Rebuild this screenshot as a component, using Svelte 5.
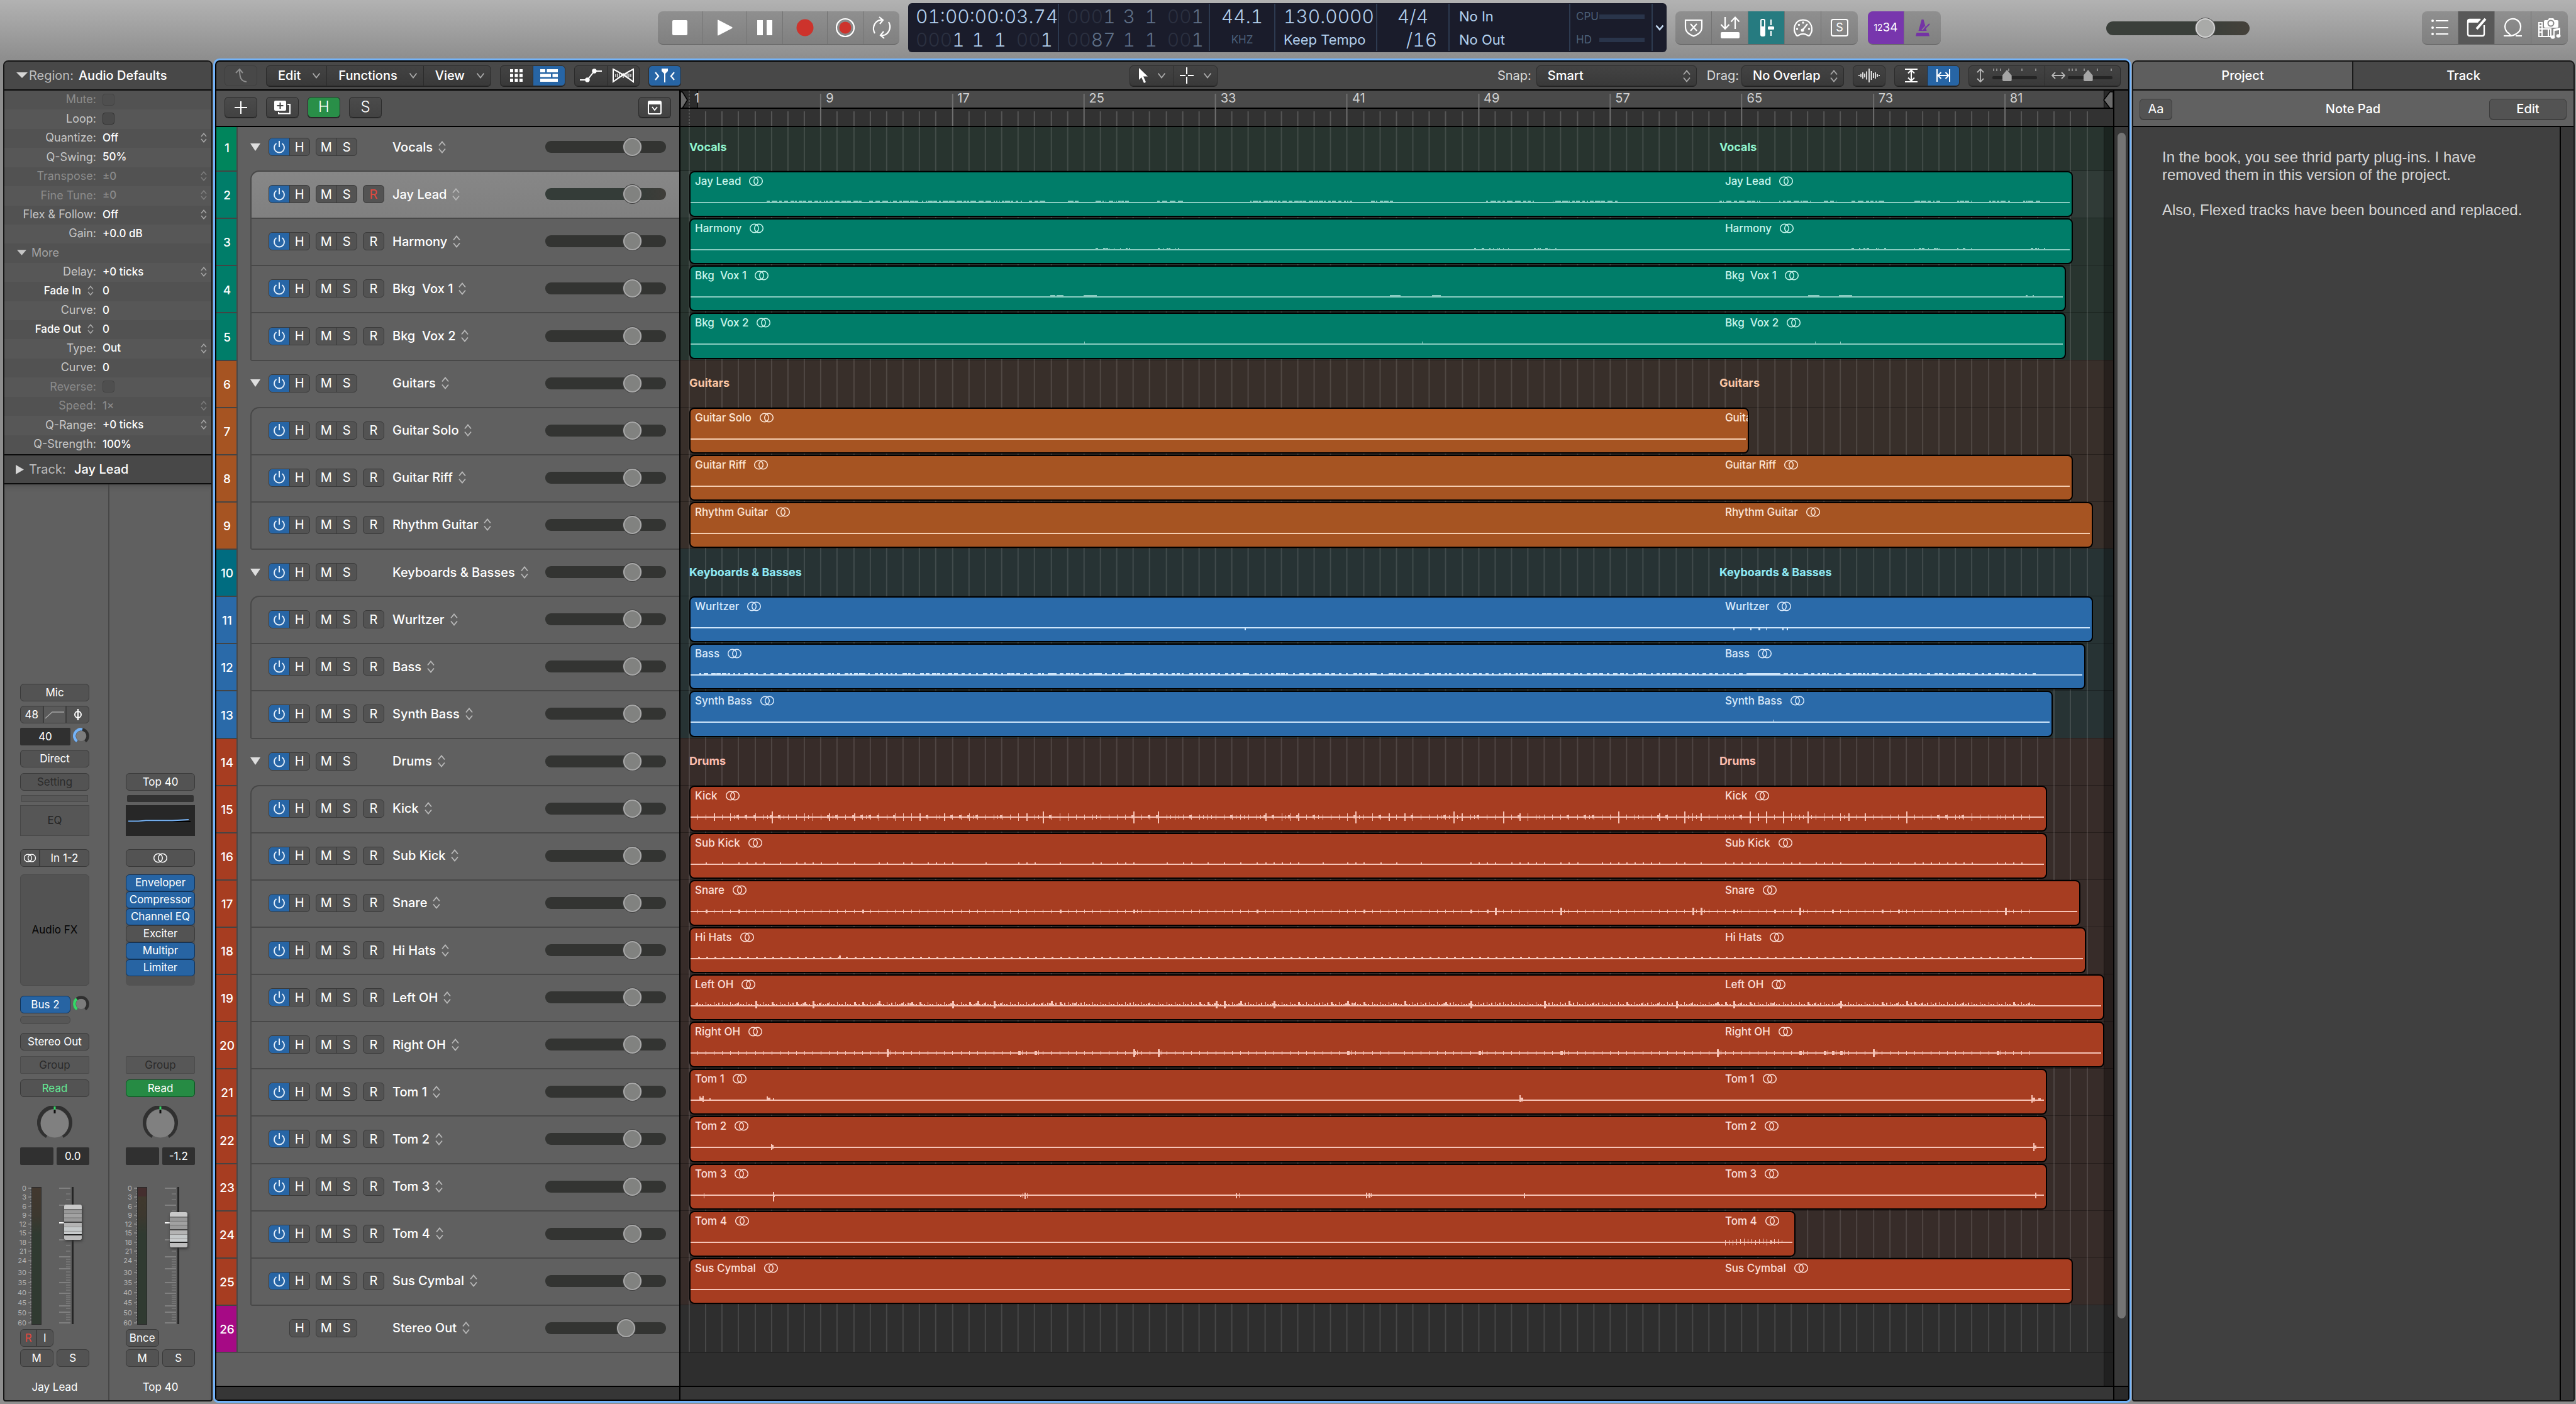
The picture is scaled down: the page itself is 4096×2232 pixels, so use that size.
<script>
  const LANE = 2279;
  const FIRST = 14;
  const BAR = 26.16;

  const green = { base: '#007d69', wave: '#8accc1', text: '#c8f5ec', lane: '#28342f', group: '#8ff5cf' };
  const orange = { base: '#a65422', wave: '#f5cdb0', text: '#fde6d6', lane: '#382f2a', group: '#fbc6a4' };
  const blue = { base: '#2a6aa9', wave: '#cfe6fb', text: '#dcebfc', lane: '#273334', group: '#8feaf5' };
  const red = { base: '#a73d21', wave: '#f6c4b7', text: '#fddfd8', lane: '#372c29', group: '#fbbcae' };
  const grey = { base: '#a60a85', wave: '#fff', text: '#fff', lane: '#2e2e2e', group: '#fff' };

  const tracks = [
    { name: 'Vocals', kind: 'group', c: green, num: '#00855c' },
    { name: 'Jay Lead', c: green, end: 3297, wave: 'lead', selected: true, first: true },
    { name: 'Harmony', c: green, end: 3297, wave: 'harmony' },
    { name: 'Bkg  Vox 1', c: green, end: 3286, wave: 'vox1' },
    { name: 'Bkg  Vox 2', c: green, end: 3286, wave: 'vox2' },
    { name: 'Guitars', kind: 'group', c: orange },
    { name: 'Guitar Solo', c: orange, end: 2782, first: true },
    { name: 'Guitar Riff', c: orange, end: 3297 },
    { name: 'Rhythm Guitar', c: orange, end: 3329 },
    { name: 'Keyboards & Basses', kind: 'group', c: blue, num: '#006c80' },
    { name: 'Wurltzer', c: blue, end: 3329, wave: 'wurl', first: true },
    { name: 'Bass', c: blue, end: 3317, wave: 'bass' },
    { name: 'Synth Bass', c: blue, end: 3265, wave: 'synth' },
    { name: 'Drums', kind: 'group', c: red },
    { name: 'Kick', c: red, end: 3256, wave: 'kick', first: true },
    { name: 'Sub Kick', c: red, end: 3256, wave: 'subkick' },
    { name: 'Snare', c: red, end: 3309, wave: 'snare' },
    { name: 'Hi Hats', c: red, end: 3318, wave: 'hats' },
    { name: 'Left OH', c: red, end: 3347, wave: 'left' },
    { name: 'Right OH', c: red, end: 3347, wave: 'right' },
    { name: 'Tom 1', c: red, end: 3256, wave: 'tom1' },
    { name: 'Tom 2', c: red, end: 3256, wave: 'tom2' },
    { name: 'Tom 3', c: red, end: 3256, wave: 'tom3' },
    { name: 'Tom 4', c: red, end: 2856, wave: 'tom4' },
    { name: 'Sus Cymbal', c: red, end: 3297 },
    { name: 'Stereo Out', kind: 'output', c: grey }
  ];

  const lines = Array.from({ length: 86 }, (_, i) => Math.round(FIRST + i * BAR));
  const bars = [1, 9, 17, 25, 33, 41, 49, 57, 65, 73, 81];
  const share = (v) => ((v / LANE) * 100).toFixed(3);

  function random(seed) {
    let s = seed;
    return () => {
      s = (s * 1103515245 + 12345) % 2147483648;
      return s / 2147483648;
    };
  }

  const spans = {
    lead: [[1219, 1370], [1382, 1460], [1466, 1626], [1636, 1664], [1698, 1718], [1742, 1799], [1840, 1883], [1988, 2150], [2180, 2220], [2364, 2440], [2470, 2573], [2735, 2800], [2830, 2880], [2901, 2922], [2945, 3000], [3045, 3086], [3113, 3138], [3164, 3197], [3218, 3245]],
    harmony: [[1742, 1773], [1781, 1797], [1841, 1883], [2345, 2400], [2440, 2480], [2945, 2973], [2984, 3000], [3045, 3086], [3113, 3140], [3230, 3254]]
  };

  const marks = {
    vox1: [[1670, 8, 2, 0], [1680, 11, 2, 0], [1723, 21, 2, 0], [2210, 18, 2, 0], [2278, 14, 2, 0], [2876, 18, 2, 0], [2925, 21, 2, 0], [3222, 3, 2, 0], [3233, 2, 2, 0]],
    vox2: [[1724, 1, 3, 0], [2262, 1, 3, 0], [2887, 1, 3, 0], [2927, 1, 3, 0]],
    wurl: [[1979, 2, 0, 3], [2757, 2, 0, 3], [2784, 2, 0, 3], [2797, 3, 0, 3], [2809, 1, 0, 3], [2835, 2, 0, 3], [2842, 2, 0, 3]],
    synth: [[2821, 1, 3, 0]],
    tom1: [[1112, 2, 5, 0], [1114, 5, 3, 0], [1117, 2, 6, 2], [1128, 2, 2, 0], [1219, 2, 5, 0], [1221, 4, 3, 0], [1229, 2, 2, 0], [2417, 2, 7, 2], [2419, 4, 3, 1], [3231, 2, 8, 3], [3233, 4, 3, 1], [3242, 4, 2, 0]],
    tom2: [[1226, 2, 4, 3], [1228, 2, 3, 1], [3234, 2, 6, 5], [3236, 3, 2, 1]],
    tom3: [[1119, 1, 2, 4], [1229, 2, 4, 9], [1231, 1, 0, 2], [1622, 2, 0, 2], [1626, 1, 2, 3], [1629, 2, 3, 5], [1633, 1, 2, 4], [1965, 2, 2, 4], [1970, 1, 2, 3], [2172, 2, 3, 4], [2176, 3, 2, 3], [2180, 1, 2, 2], [2424, 2, 2, 4], [3237, 2, 3, 4]]
  };

  // Each mark is x, width, height above the centre line, height below it.
  function waveMarks(kind) {
    const r = random(kind.length * 977 + kind.charCodeAt(0) * 31 + kind.charCodeAt(1));
    if (marks[kind]) return marks[kind];
    const out = [];
    if (spans[kind]) {
      for (const [a, b] of spans[kind]) {
        for (let x = a; x < b; ) {
          const w = 1 + Math.floor(r() * (kind === 'lead' ? 9 : 4));
          out.push([x, Math.min(w, b - x), 2, 0]);
          x += w + 1 + Math.floor(r() * (kind === 'lead' ? 4 : 9));
        }
      }
    } else if (kind === 'bass') {
      for (let x = 1112; x < 3240; x += 7 + Math.floor(r() * 6)) out.push([x, 3 + Math.floor(r() * 5), 2, 0]);
      out.push([2783, 47, 2, 0]);
    } else if (kind === 'tom4') {
      for (let x = 2744; x < 2832; x += 6) out.push([x, 1, 3 + Math.floor(r() * 3), 2 + Math.floor(r() * 3)]);
      out.push([2816, 3, 2, 1], [2834, 1, 2, 0]);
    } else {
      for (let i = 0; i < 163; i++) {
        const x = Math.round(1109 + i * 13.08);
        const q = r();
        if (kind === 'kick') {
          const tall = q > 0.94 ? 9 : q > 0.75 ? 5 : 3;
          out.push([x, q > 0.85 ? 2 : 1, tall, tall]);
          if (r() > 0.75) out.push([x + 6, 1, 2, 2]);
          if (r() > 0.7) out.push([x - 3, 3, 2, 1]);
        } else if (kind === 'subkick') {
          if (q > 0.4) out.push([x, 2, 2, 0]);
        } else if (kind === 'snare') {
          out.push([x, q > 0.85 ? 3 : 1, q > 0.96 ? 5 : 2, q > 0.96 ? 5 : 2]);
          if (q > 0.9) out.push([x + 6, 1, 2, 1]);
        } else if (kind === 'hats') {
          out.push([x + 1, 3, 2, 0]);
          if (i === 8) out.push([1334, 3, 4, 0]);
        } else if (kind === 'left') {
          out.push([x, q > 0.8 ? 3 : 1, q > 0.9 ? 7 : 5, q > 0.93 ? 3 : 0]);
          out.push([x + 3, 2, 2, 0], [x + 7, 2, r() > 0.7 ? 4 : 2, 0]);
          if (r() > 0.8) out.push([x - 3, 3, 3, 0]);
        } else if (kind === 'right') {
          out.push([x, q > 0.9 ? 3 : 1, q > 0.95 ? 5 : 2, q > 0.95 ? 5 : 2]);
          if (q > 0.9) out.push([x + 6, 1, 3, 2], [x + 3, 1, 2, 2]);
        }
      }
    }
    return out;
  }

  function wavePath(t) {
    const w = t.end - 1100;
    let d = `M0 48H${w - 3}V50H0Z`;
    if (t.wave) {
      for (const [x, mw, up, down] of waveMarks(t.wave)) {
        d += `M${x - 1098} ${48 - up}h${mw}v${up + down + 2}h${-mw}z`;
      }
    }
    return d;
  }

  const params = [
    { l: 'Mute:', box: true, off: true },
    { l: 'Loop:', box: true },
    { l: 'Quantize:', v: 'Off', a: true },
    { l: 'Q-Swing:', v: '50%' },
    { l: 'Transpose:', v: '±0', a: true, off: true },
    { l: 'Fine Tune:', v: '±0', a: true, off: true },
    { l: 'Flex & Follow:', v: 'Off', a: true },
    { l: 'Gain:', v: '+0.0 dB' },
    { more: true },
    { l: 'Delay:', v: '+0 ticks', a: true },
    { l: 'Fade In', v: '0', pick: true },
    { l: 'Curve:', v: '0' },
    { l: 'Fade Out', v: '0', pick: true },
    { l: 'Type:', v: 'Out', a: true },
    { l: 'Curve:', v: '0' },
    { l: 'Reverse:', box: true, off: true },
    { l: 'Speed:', v: '1×', a: true, off: true },
    { l: 'Q-Range:', v: '+0 ticks', a: true },
    { l: 'Q-Strength:', v: '100%' }
  ];

  const scale = [['0', 9], ['3', 23], ['6', 38], ['9', 52], ['12', 66], ['15', 80], ['18', 95], ['21', 109], ['24', 124], ['30', 143], ['35', 159], ['40', 175], ['45', 191], ['50', 207], ['60', 223]];
  const majors = [9, 36, 91, 118, 137, 159, 176, 196, 206, 223];
  const minors = [18, 27, 45, 54, 73, 82, 100, 109, 122, 126, 130, 134, 142, 147, 151, 155, 163, 167, 171, 180, 183, 186, 189, 192, 200, 210, 214, 218];

  const plugins = [['Enveloper', 1], ['Compressor', 1], ['Channel EQ', 1], ['Exciter', 0], ['Multipr', 1], ['Limiter', 1]];

  const note = 'In the book, you see thrid party plug-ins. I have\nremoved them in this version of the project.\n\nAlso, Flexed tracks have been bounced and replaced.';
</script>

{#snippet updown()}
  <svg class="updown" viewBox="0 0 12 20" aria-hidden="true"><path d="M1 7.500 6 1.500l5 6M1 12.500l5 6 5-6" /></svg>
{/snippet}

{#snippet chev()}
  <svg class="chev" viewBox="0 0 14 10" aria-hidden="true"><path d="M1.500 1.500 7 8.500l5.500-7" /></svg>
{/snippet}

{#snippet stereo()}
  <svg class="stereo" viewBox="0 0 24 16" aria-hidden="true"><circle cx="8.500" cy="8" r="6.800" /><circle cx="15.500" cy="8" r="6.800" /></svg>
{/snippet}

{#snippet digits(fields)}
  <span class="digits">
    {#each fields as [dim, lit]}<span><i>{dim}</i>{lit}</span>{/each}
  </span>
{/snippet}

{#snippet pan()}
  <svg class="pan" viewBox="0 0 56 52" aria-hidden="true">
    <path d="M15.500 48.500A25 25 0 1 1 40.500 48.500" fill="none" stroke="#303030" stroke-width="6" />
    <circle cx="28" cy="28" r="22.500" fill="#808080" />
    <path d="M28 1v5" stroke="#35d866" stroke-width="3" /><path d="M28 6v6" stroke="#111" stroke-width="3" />
  </svg>
{/snippet}

{#snippet smallKnob(color, d)}
  <svg class="knob" viewBox="0 0 26 26" aria-hidden="true">
    <path d="M6.500 21.500A10.600 10.600 0 1 1 19.500 21.500" fill="none" stroke="#2f2f2f" stroke-width="4.500" />
    <path {d} fill="none" stroke={color} stroke-width="4.500" />
    <circle cx="13" cy="13" r="8" fill="#7c7c7c" />
  </svg>
{/snippet}

{#snippet meter(id, value, hot)}
  <div class="meter">
    <svg viewBox="0 0 110 226" aria-hidden="true">
      <defs>
        <linearGradient id="m{id}" x2="0" y2="1">
          {#if hot}<stop offset="0" stop-color="#442e2e" /><stop offset=".06" stop-color="#442e2e" /><stop offset=".07" stop-color="#40392e" />{:else}<stop offset="0" stop-color="#42382f" />{/if}
          <stop offset=".2" stop-color="#3d382f" /><stop offset=".34" stop-color="#303a31" /><stop offset="1" stop-color="#303a31" />
        </linearGradient>
      </defs>
      {#each scale as [label, y]}
        <text x="10" y={y + 4}>{label}</text>
        <path d="M13 {y}h5" stroke="#a8a8a8" />
      {/each}
      {#each Array(48) as _, i}<path d="M16 {9 + i * 4.500}h2" stroke="#979797" />{/each}
      <path d="M18 7h16v219H18z" fill="#2a2a2a" />
      <path d="M19 8h14v217H19z" fill="url(#m{id})" />
      {#each majors as y}<path d="M62 {y}h18" stroke="#a0a0a0" />{/each}
      {#each minors as y}<path d="M73 {y}h7" stroke="#878787" />{/each}
      <path d="M62 64h8" stroke="#fff" stroke-width="2" />
    </svg>
    <input class="fader" type="range" min="0" max="1000" {value} aria-label="Volume" />
  </div>
{/snippet}

<div class="app">
  <header class="topbar">
    <span class="g1046"></span>
    <div class="seg transport">
      <button aria-label="Stop"><svg width="40" height="40" viewBox="0 0 40 40"><rect x="8" y="8" width="24" height="24" rx="2" fill="#fff" /></svg></button>
      <button aria-label="Play"><svg width="40" height="40" viewBox="0 0 40 40"><path d="M9 8.500q0-1.500 1.400-.8L32 19q1.500 1 0 2L10.400 32.300Q9 33 9 31.500z" fill="#fff" /></svg></button>
      <button class="nar" aria-label="Pause"><svg width="40" height="40" viewBox="0 0 40 40"><path d="M8 8h9v24H8zM23 8h9v24h-9z" fill="#fff" /></svg></button>
      <button aria-label="Record"><svg width="40" height="40" viewBox="0 0 40 40"><circle cx="20" cy="20" r="13.500" fill="#cd332c" /></svg></button>
      <button class="nar" aria-label="Capture"><svg width="40" height="40" viewBox="0 0 40 40"><circle cx="20" cy="20" r="14" fill="none" stroke="#fff" stroke-width="2.200" /><circle cx="20" cy="20" r="9.500" fill="#cd332c" /></svg></button>
      <button class="nar" aria-label="Cycle"><svg width="40" height="40" viewBox="0 0 40 40" fill="none" stroke="#fff" stroke-width="2.200"><path d="M9 29A14.500 14.500 0 0 1 15 8.500l5-1M31 11a14.500 14.500 0 0 1-6 20.500l-5 1M16 3l6 5-5 6M24 37l-6-5 5-6" /></svg></button>
    </div>
    <div class="lcd">
      <div class="pos">
        <span class="time">01:00:00:03.74</span>
        {@render digits([['000', '1'], ['', '1'], ['', '1'], ['00', '1']])}
      </div>
      <div class="pos loc">
        {@render digits([['000', '1'], ['', '3'], ['', '1'], ['00', '1']])}
        {@render digits([['00', '87'], ['', '1'], ['', '1'], ['00', '1']])}
      </div>
      <div class="khz"><b>44.1</b><small>KHZ</small></div>
      <div class="tempo"><b>130.0000</b><em>Keep Tempo</em></div>
      <div class="sig"><b>4/4</b><b class="den">/16</b></div>
      <div class="io"><em>No In</em><em>No Out</em></div>
      <div class="load"><small>CPU<i></i></small><small>HD<i></i></small></div>
      <button class="lcdmenu" aria-label="Display mode"><svg width="14" height="10" viewBox="0 0 14 10"><path d="M1.500 1.500 7 8l5.500-6.500" fill="none" stroke="#c4daf2" stroke-width="2.600" /></svg></button>
    </div>
    <div class="seg modes">
      <button aria-label="Replace"><svg width="40" height="40" viewBox="0 0 40 40" fill="none" stroke="#fff" stroke-width="2.200"><path d="M7 8h26v11c0 9-7 12-13 14.500C14 31 7 28 7 19zM15 14l10 11M25 14 15 25" /></svg></button>
      <button aria-label="Low latency"><svg width="40" height="40" viewBox="0 0 40 40" fill="none" stroke="#fff" stroke-width="2.200"><path d="M12 3v18M5.500 15l6.500 7 6.500-7M28 22V4M21.500 10.500 28 3.500l6.500 7" /><rect x="5" y="27" width="30" height="10" rx="2" fill="#fff" stroke="none" /></svg></button>
      <button class="teal" aria-label="Mixer"><svg width="40" height="40" viewBox="0 0 40 40"><rect x="11" y="7" width="6" height="26" rx="2" fill="none" stroke="#fff" stroke-width="2" /><path d="M11 18h6v14h-6zM26 7h2v9h-2zM26 25h2v8h-2z" fill="#fff" /><rect x="22" y="18" width="10" height="5" rx="1.500" fill="#fff" /></svg></button>
      <button aria-label="Tuner"><svg width="40" height="40" viewBox="0 0 40 40" fill="none" stroke="#fff" stroke-width="2.200"><path d="M9 31.500C3 23 6 8 20 7.500 34 8 37 23 31 31.500c-1 2-2.500 1.500-4 .5-5-3-9-3-14 0-1.500 1-3 1.500-4-.5zM19 24l8-10" /><g fill="#fff" stroke="none"><circle cx="20" cy="12" r="1.700" /><circle cx="13.500" cy="15.500" r="1.700" /><circle cx="10.500" cy="22" r="1.700" /><circle cx="29.500" cy="22" r="1.700" /><circle cx="19" cy="24" r="2.500" /></g></svg></button>
      <button aria-label="Solo"><span class="boxs">S</span></button>
    </div>
    <div class="seg count">
      <button class="purple" aria-label="Count in"><small>12</small><big>34</big></button>
      <button aria-label="Metronome"><svg width="40" height="40" viewBox="0 0 40 40" fill="#7433a5"><path d="M18.500 7h3l5 18h-13zM10.500 28h19l1.500 5.500H9z" /><path d="M20 25 31 14" stroke="#7433a5" stroke-width="2" /><path d="m19 24 5-6" stroke="#888" stroke-width="1.500" /></svg></button>
    </div>
    <span class="g263"></span>
    <input class="master" type="range" min="0" max="100" value="72" aria-label="Master volume" />
    <span class="g274"></span>
    <div class="seg views">
      <button aria-label="List editors"><svg width="40" height="40" viewBox="0 0 40 40" fill="#fff"><circle cx="8" cy="9" r="2" /><circle cx="8" cy="20" r="2" /><circle cx="8" cy="30" r="2" /><path d="M13 8h20v2H13zM13 19h20v2H13zM13 29h20v2H13z" /></svg></button>
      <button class="dark" aria-label="Note pads"><svg width="40" height="40" viewBox="0 0 40 40"><path d="M32 16v14q0 3-3 3H9q-3 0-3-3V10q0-3 3-3h17" fill="none" stroke="#fff" stroke-width="2.400" /><path d="M6 8q0-2 3-2h18l-5 6H6z" fill="#fff" /><path d="M20 22 34 6" stroke="#fff" stroke-width="4" /></svg></button>
      <button aria-label="Loop browser"><svg width="40" height="40" viewBox="0 0 40 40" fill="none" stroke="#fff" stroke-width="2.200"><path d="M5 33h11l4-1c6-2 12-6 12-13A12.500 12.500 0 1 0 13 29l3 3M24 33h10M16 33l6-1" /></svg></button>
      <button aria-label="Media browser"><svg width="40" height="40" viewBox="0 0 40 40" fill="#fff"><path d="M13 8h4l2-3h7l2 3h4q2 0 2 2v8q0 2-2 2H13q-2 0-2-2v-8q0-2 2-2z" /><circle cx="22" cy="13" r="4.500" fill="none" stroke="#888" stroke-width="2" /><path d="M3 12h5v22H3zM8 22h14v12H8z" fill="none" stroke="#fff" stroke-width="2" /><path d="M3 17h5M3 22h5M3 27h5M18 22v12" stroke="#fff" stroke-width="2" /><path d="M26 22l11-2v13h-2V24l-7 1v11h-2z" /><ellipse cx="25" cy="35" rx="3.500" ry="2.800" /><ellipse cx="34" cy="33" rx="3.500" ry="2.800" /></svg></button>
    </div>
  </header>

  <div class="body">
    <aside class="inspector">
      <button class="phead"><svg class="tri" viewBox="0 0 18 10"><path d="M0 0h18L9 9z" /></svg><span>Region:</span> <strong>Audio Defaults</strong></button>
      <div class="params">
        {#each params as p, i}
          {#if p.more}
            <button class="param more"><svg class="tri" viewBox="0 0 16 9"><path d="M0 0h16L8 9z" /></svg>More</button>
          {:else}
            <div class="param" class:off={p.off}>
              <label for="p{i}" class:pick={p.pick}>{p.l}{#if p.pick}{@render updown()}{/if}</label>
              {#if p.box}
                <input id="p{i}" type="checkbox" />
              {:else}
                <button id="p{i}" class="val" aria-label="{p.l} {p.v}">{p.v}</button>
              {/if}
              {#if p.a}{@render updown()}{/if}
            </div>
          {/if}
        {/each}
      </div>
      <button class="phead last"><svg class="tri side" viewBox="0 0 12 14"><path d="M0 0v14l12-7z" /></svg><span>Track:</span> <strong>&nbsp;Jay Lead</strong></button>

      <div class="strips">
        <div class="strip">
          <div class="inputs">
            <button class="b">Mic</button>
            <div class="b split three"><button>48</button><button aria-label="High pass"><svg width="32" height="14" viewBox="0 0 32 14"><path d="M1 13 12 3h19" fill="none" stroke="#a5a5a5" stroke-width="1.500" /></svg></button><button aria-label="Phase"><svg width="14" height="20" viewBox="0 0 14 20" fill="none" stroke="#fff" stroke-width="2"><circle cx="7" cy="10" r="5" /><path d="M7 1v18" /></svg></button></div>
            <div class="pair"><output class="disp">40</output>{@render smallKnob('#75b3f8', 'M6.500 21.500A10.600 10.600 0 0 1 15 2.600')}</div>
            <button class="b">Direct</button>
          </div>
          <button class="b dim">Setting</button>
          <div class="thin"></div>
          <button class="eq">EQ</button>
          <div class="b split two io2"><button aria-label="Stereo">{@render stereo()}</button><button>In 1-2</button></div>
          <button class="fx">Audio FX</button>
          <div class="sends">
            <div class="pair"><button class="b on bus">Bus 2</button>{@render smallKnob('#37d768', 'M6.500 21.500A10.600 10.600 0 0 1 6 5')}</div>
            <div class="slot"></div>
          </div>
          <button class="b out">Stereo Out</button>
          <button class="b grp">Group</button>
          <button class="b read">Read</button>
          {@render pan()}
          <div class="nums"><output></output><output>0.0</output></div>
          {@render meter('a', 827, false)}
          <div class="pads"><div class="b split half"><button class="rec">R</button><button>I</button></div></div>
          <div class="pads ms"><button class="b">M</button><button class="b">S</button></div>
          <div class="sname">Jay Lead</div>
        </div>
        <div class="strip right">
          <div class="inputs"></div>
          <button class="b set">Top 40</button>
          <div class="thin lit"></div>
          <div class="eq lit"><svg width="106" height="10" viewBox="0 0 106 10" fill="none"><path d="M4 6h99" stroke="#000" stroke-width="2" /><path d="M4 5.500h16l12-1h42l26-1.500" stroke="#78b4f6" stroke-width="1.800" /></svg></div>
          <button class="b io2" aria-label="Stereo">{@render stereo()}</button>
          <div class="fx list">{#each plugins as [p, on]}<button class="b" class:on>{p}</button>{/each}</div>
          <div class="sends"></div>
          <div class="out blank"></div>
          <button class="b grp">Group</button>
          <button class="b read go">Read</button>
          {@render pan()}
          <div class="nums"><output></output><output>-1.2</output></div>
          {@render meter('b', 753, true)}
          <div class="pads"><button class="b">Bnce</button></div>
          <div class="pads ms"><button class="b">M</button><button class="b">S</button></div>
          <div class="sname">Top 40</div>
        </div>
      </div>
    </aside>

    <main class="arrange">
      <div class="tools">
        <button class="t ghost" aria-label="Up"><svg width="22" height="24" viewBox="0 0 22 24"><path d="M20 22C10 21 9 14 9 2M3 8l6-6 5 6" fill="none" stroke="#8f8f8f" stroke-width="2" /></svg></button>
        <div class="tg menus"><button>Edit {@render chev()}</button><button>Functions {@render chev()}</button><button>View {@render chev()}</button></div>
        <div class="tg"><button aria-label="Grid"><svg width="22" height="22" viewBox="0 0 22 22" fill="#fff"><path d="M1 1h5v5H1zM8.500 1h5v5h-5zM16 1h5v5h-5zM1 8.500h5v5H1zM8.500 8.500h5v5h-5zM16 8.500h5v5h-5zM1 16h5v5H1zM8.500 16h5v5h-5zM16 16h5v5h-5z" /></svg></button><button class="on" aria-label="Tracks"><svg width="30" height="22" viewBox="0 0 30 22" fill="#fff"><path d="M1 1h8v5H1zM11.500 1H29v5H11.500zM1 8.500h17v5H1zM20.500 8.500H29v5h-8.500zM1 16h28v5H1z" /></svg></button></div>
        <div class="tg"><button aria-label="Automation"><svg width="38" height="24" viewBox="0 0 38 24"><path d="M2 19h12L25 5h12" fill="none" stroke="#fff" stroke-width="2" /><circle cx="14" cy="19" r="3.700" fill="#fff" /><circle cx="25" cy="5" r="3.700" fill="#fff" /></svg></button><button aria-label="Flex"><svg width="36" height="24" viewBox="0 0 36 24" fill="none" stroke="#fff"><path d="M2 2q16 8 32 20V2Q18 10 2 22z" stroke-width="2" /><path d="M6 10v4M9 9v6M12 8v6M15 10v4M18 8v8M21 10v4M24 8v6M27 9v6M30 10v4" stroke-width="1.300" /></svg></button></div>
        <button class="t on" aria-label="Catch"><svg width="34" height="24" viewBox="0 0 34 24"><path d="M12 1h10v4l-4 4v14h-2V9l-4-4z" fill="#fff" /><path d="M2 7l5 6-5 6M32 7l-5 6 5 6" fill="none" stroke="#fff" stroke-width="2.200" /></svg></button>
        <span class="s13"></span>
        <div class="tg wide"><button aria-label="Pointer tool"><svg width="16" height="26" viewBox="0 0 16 26"><path d="M1 1v19l4-4 4 9 3-1.500-4-9h7z" fill="#fff" /></svg>{@render chev()}</button><button aria-label="Marquee tool"><svg width="24" height="26" viewBox="0 0 24 26"><path d="M12 0v11M12 15v11M1 13h9M14 13h9" stroke="#fff" stroke-width="2" /></svg>{@render chev()}</button></div>
        <span class="s8"></span>
        <label class="lab" for="snap">Snap:</label>
        <div class="sel snap"><select id="snap"><option>Smart</option></select>{@render updown()}</div>
        <label class="lab drag" for="drag">Drag:</label>
        <div class="sel"><select id="drag"><option>No Overlap</option></select>{@render updown()}</div>
        <button class="t" aria-label="Waveform zoom"><svg width="36" height="24" viewBox="0 0 36 24"><path d="M2 11v2M5 9.500v5M8 7v10M11 9v6M14 5.500v13M18 1v22M21.500 5v14M25 8v8M28 7v10M31 10v4M34 11v2" stroke="#fff" stroke-width="1.600" /></svg></button>
        <div class="tg"><button aria-label="Fit vertically"><svg width="22" height="24" viewBox="0 0 22 24" fill="none" stroke="#fff" stroke-width="2"><path d="M1 2h20M1 22h20M11 4v16M6 8.500 11 3.500l5 5M6 15.500l5 5 5-5" /></svg></button><button class="on" aria-label="Fit horizontally"><svg width="24" height="22" viewBox="0 0 24 22" fill="none" stroke="#fff" stroke-width="2"><path d="M2 1v20M22 1v20M4 11h16M8.500 6 3.500 11l5 5M15.500 6l5 5-5 5" /></svg></button></div>
        <div class="tg zooms">
          <label><svg width="12" height="22" viewBox="0 0 12 22"><path d="M6 1v20M1 6l5-5 5 5M1 16l5 5 5-5" fill="none" stroke="#b9b9b9" stroke-width="1.800" /></svg><span class="zs"><svg width="70" height="6" viewBox="0 0 70 6"><path d="M2 1v4M7 1v4M13 1v4M26 1v4M47 1v4M69 1v4" stroke="#8c8c8c" stroke-width="2" /></svg><input type="range" value="28" aria-label="Vertical zoom" /></span></label>
          <label><svg width="22" height="12" viewBox="0 0 22 12"><path d="M1 6h20M6 1 1 6l5 5M16 1l5 5-5 5" fill="none" stroke="#b9b9b9" stroke-width="1.800" /></svg><span class="zs"><svg width="70" height="6" viewBox="0 0 70 6"><path d="M2 1v4M7 1v4M13 1v4M26 1v4M47 1v4M69 1v4" stroke="#8c8c8c" stroke-width="2" /></svg><input type="range" value="44" aria-label="Horizontal zoom" /></span></label>
        </div>
      </div>

      <div class="grid">
        <div class="hhead">
          <button class="t" aria-label="Add track"><svg width="20" height="20" viewBox="0 0 20 20"><path d="M10 0v20M0 10h20" stroke="#fff" stroke-width="2" /></svg></button>
          <button class="t" aria-label="Duplicate track"><svg width="28" height="24" viewBox="0 0 28 24"><rect x="1" y="1" width="19" height="16" rx="2" fill="#fff" /><path d="M10.500 4v10M5.500 9h10" stroke="#444" stroke-width="2" /><path d="M22 7h4v14.500H8V19" fill="none" stroke="#fff" stroke-width="2" /></svg></button>
          <button class="t letter go">H</button>
          <button class="t letter">S</button>
          <button class="t cfg" aria-label="Header settings"><svg width="22" height="22" viewBox="0 0 22 22"><rect x="1" y="1" width="20" height="20" rx="2" fill="none" stroke="#fff" stroke-width="2" /><path d="M1 1h20v5H1z" fill="#fff" /><path d="m7 10 4 5 4-5" fill="none" stroke="#fff" stroke-width="1.800" /></svg></button>
        </div>
        <div class="ruler">
          <div class="rtop"><span class="pre"></span><span class="mid"></span><span class="post"></span></div>
          <div class="rbot"></div>
          <svg class="rl" viewBox="0 0 2279 56" preserveAspectRatio="none" aria-hidden="true">
            {#each lines as x, i}
              {#if i === 0}<path d="M{x} 0v56" stroke="#777" stroke-width="1" stroke-dasharray="3 2" />
              {:else if i % 8 === 0}<path d="M{x} 5v51" stroke="#6f6f6f" stroke-width="2" />
              {:else}<path d="M{x} 33v23" stroke="#565656" stroke-width="2" />{/if}
            {/each}
            <path d="M0 2h3l8 13-8 13H0zM2279 2h-5l-10 13 10 13h5z" fill="#6b6b6b" stroke="#000" stroke-width="1.500" />
          </svg>
          {#each bars as b}<span class="barno" style:left="{share(FIRST + (b - 1) * BAR + 8)}%">{b}</span>{/each}
        </div>
        <div class="corner"></div>

        <div class="headers">
          <div class="rows">
            {#each tracks as t, i}
              <div class="track {t.kind ?? 'child'}" class:first={t.first} class:selected={t.selected}>
                <span class="num" style:background={t.num ?? t.c.base}><span>{i + 1}</span></span>
                <div class="tb">
                  <span class="tslot">{#if t.kind === 'group'}<svg width="16" height="12" viewBox="0 0 16 12"><path d="M0 0h16L8 12z" fill="#dedede" /></svg>{/if}</span>
                  <span class="mini ph">{#if t.kind !== 'output'}<button class="pw" aria-label="Power"><svg width="20" height="22" viewBox="0 0 20 22" fill="none" stroke="#e3eefa" stroke-width="2"><path d="M5.500 5A8 8 0 1 0 14.500 5M10 1v10" /></svg></button>{/if}<button>H</button></span>
                  <span class="mini"><button>M</button><button>S</button></span>
                  <span class="rslot">{#if !t.kind}<span class="mini one"><button class:rec={t.selected}>R</button></span>{/if}</span>
                  <button class="tname">{t.name}{@render updown()}</button>
                  <input class="vol" type="range" min="0" max="100" value={t.kind === 'output' ? 70 : 76} aria-label="{t.name} volume" />
                </div>
              </div>
            {/each}
          </div>
          <div class="rest"></div>
        </div>

        <div class="lanes">
          <div class="rows">
            <svg class="gl" viewBox="0 0 2279 100" preserveAspectRatio="none" aria-hidden="true">
              {#each lines as x}<path d="M{x} 0v100" />{/each}
            </svg>
            {#each tracks as t}
              <div class="lane" class:selected={t.selected} style:background={t.c.lane} style:--g={t.c.group}>
                {#if t.kind === 'group'}
                  <span class="gname">{t.name}</span><span class="gname">{t.name}</span>
                {:else if t.end}
                  <div class="region" style:width="{share(t.end - 1096)}cqw" style:background={t.c.base} style:color={t.c.text}>
                    <svg class="wave" viewBox="0 0 {t.end - 1100} 70" preserveAspectRatio="none" shape-rendering="crispEdges" aria-hidden="true"><path d={wavePath(t)} fill={t.c.wave} /></svg>
                    <span class="rn">{t.name}{@render stereo()}</span><span class="rn">{t.name}{@render stereo()}</span>
                  </div>
                {/if}
              </div>
            {/each}
          </div>
          <div class="rest"></div>
          <div class="endzone"></div>
        </div>
        <div class="vscroll"><span></span></div>

        <div class="foot a"></div><div class="foot b2"></div><div class="foot c"></div>
      </div>
    </main>

    <aside class="notes">
      <div class="tabs"><button class="act">Project</button><button>Track</button></div>
      <div class="nhead"><button>Aa</button><h2>Note Pad</h2><button class="ed">Edit</button></div>
      <div class="nbody"><textarea aria-label="Project notes" readonly value={note}></textarea><span></span></div>
    </aside>
  </div>
</div>

<style>
  :global(body) { margin: 0; background: #d0d0d0; }
  .app { height: 100vh; min-width: 2600px; display: flex; flex-direction: column; overflow: hidden; box-sizing: border-box; padding-bottom: 2px; background: linear-gradient(#b2b2b2, #8e8e8e 93px); font: 20px/1.2 Inter, "Liberation Sans", sans-serif; color: #fff; }
  .app :global(*) { box-sizing: border-box; }
  button, input, select, textarea { font: inherit; color: inherit; background: none; border: 0; margin: 0; padding: 0; }
  button { white-space: nowrap; }
  svg { flex: none; display: block; }
  .updown { width: 12px; height: 20px; }
  .updown path, .chev path { fill: none; stroke: #a8a8a8; stroke-width: 1.800; }
  .chev { width: 14px; height: 10px; }
  .stereo { width: 24px; height: 16px; fill: none; stroke: currentColor; stroke-width: 1.500; }

  /* control bar */
  .topbar { flex: none; height: 93px; display: flex; align-items: flex-start; padding-right: 13px; }
  .g1046 { flex: 1046; } .g263 { flex: 263; } .g274 { flex: 274; }
  .seg { display: flex; margin-top: 18px; height: 53px; border-radius: 8px; background: linear-gradient(#8f8f8f, #808080); border-bottom: 1px solid #606060; overflow: hidden; }
  .seg button { display: flex; align-items: center; justify-content: center; border-right: 1px solid #737373; width: 58px; }
  .seg button:last-child { border-right: 0; }
  .transport button { width: 71px; }
  .transport button.nar { width: 57px; }
  .seg .teal { background: #267b80; }
  .seg .purple { background: #7836ad; }
  .seg .dark { background: #585858; }
  .boxs { width: 28px; height: 28px; border: 2px solid #fff; border-radius: 4px; font-size: 18px; line-height: 24px; }
  .purple small { font-size: 14px; } .purple big { font-size: 19px; }
  .count button { align-items: center; }
  .lcd { display: flex; margin: 5px 14px 0 14px; height: 78px; border-radius: 6px; background: #1a1c2b; color: #b3d0ee; line-height: 37px; }
  .modes { margin-right: 16px; }
  .lcd > div { border-right: 2px solid #2d3a50; margin: 1px 0 2px; padding-top: 2px; display: flex; flex-direction: column; }
  .digits, .lcd b, .time { font-size: 30px; font-weight: 300; font-variant-numeric: tabular-nums; }
  .pos { width: 240px; padding-left: 12px; }
  .time { white-space: nowrap; }
  .digits { display: flex; text-align: right; }
  .digits > span { width: 35px; }
  .digits > span:first-child { width: 74px; text-align: left; }
  .digits > span:last-child { width: 74px; }
  .digits i { font-style: normal; color: #2b3040; }
  .loc { color: #5f7087; }
  .khz { width: 104px; align-items: center; }
  .khz small { font-size: 17px; color: #4c6079; }
  .tempo { width: 162px; padding-left: 13px; }
  .lcd em { font-style: normal; font-size: 22px; }
  .sig { width: 115px; align-items: center; }
  .sig .den { padding-left: 28px; }
  .io { width: 192px; padding-left: 15px; }
  .load { width: 131px; padding: 0 11px 0 9px; }
  .load small { display: flex; align-items: center; justify-content: space-between; font-size: 17px; color: #4c6079; }
  .load i { width: 72px; height: 7px; background: #29344a; }
  .lcdmenu { width: 22px; display: grid; place-items: center; }
  .master, .vol { appearance: none; flex: none; }
  .master { width: 228px; height: 32px; margin-top: 29px; }
  .master::-webkit-slider-runnable-track { height: 22px; border-radius: 11px; background: linear-gradient(90deg, #3a3f3a 70%, #45413a); }
  .master::-webkit-slider-thumb { appearance: none; width: 31px; height: 31px; margin-top: -5px; border-radius: 50%; background: #a9aaa8; border: 2px solid #d2d2d2; box-shadow: 0 0 0 1px #555; }

  .body { flex: 1; min-height: 0; display: grid; grid-template-columns: 333px 1fr 704px; column-gap: 1px; padding: 0 2px 0 5px; }

  /* inspector */
  .inspector { margin-top: 3px; margin-bottom: 2px; border: 2px solid #161616; border-radius: 8px 8px 4px 4px; overflow: hidden; background: #606060; display: flex; flex-direction: column; font-size: 17px; }
  .phead { flex: none; height: 46px; display: flex; align-items: center; gap: 8px; padding-left: 19px; background: #484848; border-bottom: 2px solid #0c0c0c; font-size: 20px; color: #bdbdbd; }
  .phead strong { font-weight: 500; color: #fff; }
  .phead .tri { margin-right: -6px; }
  .phead.last { border-top: 2px solid #0c0c0c; height: 48px; padding-left: 18px; }
  .tri { width: 18px; height: 10px; fill: #d6d6d6; }
  .phead .side { width: 13px; height: 15px; margin-right: 0; }
  .params { flex: none; height: 578px; display: grid; grid-template-rows: repeat(19, 1fr); }
  .param { display: flex; align-items: center; background: #525252; padding: 0 7px 2px 0; }
  .param:nth-child(even) { background: #575757; }
  .param label { width: 146px; display: flex; justify-content: flex-end; align-items: center; margin-right: 10px; color: #c6c6c6; font-size: 18px; }
  .param label.pick { color: #fff; gap: 10px; padding-right: 4px; font-size: 17px; font-weight: 500; }
  .param .updown { width: 10px; height: 16px; }
  .val { flex: 1; text-align: left; font-weight: 500; }
  .off label, .off .val { color: #8b8b8b; }
  .off .updown { opacity: .5; }
  .param input { appearance: none; width: 19px; height: 19px; border: 1px solid #333; border-radius: 4px; background: #4a4a4a; }
  .off input { border-color: #444; background: #4f4f4f; }
  .param.more { padding-left: 20px; gap: 8px; color: #a3a3a3; font-size: 18px; }
  .more .tri { width: 15px; height: 9px; fill: #c6c6c6; }
  .strips { flex: 1; min-height: 0; display: flex; box-shadow: inset 0 8px 8px -6px #4a4a4a; }
  .strip { width: 165px; padding: 0 30px 0 25px; display: flex; flex-direction: column; justify-content: flex-end; }
  .strip.right { border-left: 2px solid #474747; padding: 0 26px; }
  .b { height: 28px; width: 100%; flex: none; background: #535353; border: 1px solid #3a3a3a; border-radius: 6px; display: flex; align-items: center; justify-content: center; line-height: 1; }
  .inputs { height: 133px; display: flex; flex-direction: column; gap: 7px; margin-bottom: 9px; }
  .split button { height: 100%; flex: 1; display: flex; align-items: center; justify-content: center; line-height: 1; }
  .split button + button { border-left: 2px solid #3d3d3d; }
  .three button:nth-child(2) { background: #5a5a5a; }
  .split.two button:first-child { flex: 0 0 29px; } .two .stereo { width: 21px; height: 14px; }
  .pair { display: flex; justify-content: space-between; }
  .disp { width: 80px; height: 28px; background: #303030; border-radius: 2px; text-align: center; line-height: 28px; }
  .knob { width: 26px; height: 26px; }
  .dim, .grp { color: #2b2b2b; }
  .thin { flex: none; height: 11px; margin: 7px 2px 5px; border: 1px solid #494949; background: #585858; }
  .thin.lit { background: #323232; border: 0; border-radius: 2px; }
  .eq { flex: none; height: 49px; border: 1px solid #474747; background: #565656; color: #242424; }
  .eq.lit { background: #272727; display: flex; align-items: center; border: 0; }
  .io2 { margin-top: 21px; }
  .fx { flex: none; height: 177px; margin: 12px 0 16px; border: 1px solid #4a4a4a; border-radius: 6px; background: #535353; color: #050505; }
  .fx.list { border: 0; color: #fff; }
  .fx .b { height: 27px; }
  .on.b { background: #2764a3; border-color: #123256; }
  .sends { flex: none; height: 45px; margin-bottom: 14px; display: flex; flex-direction: column; gap: 4px; }
  .bus { width: 80px; }
  .slot { width: 80px; height: 13px; border: 1px solid #494949; border-radius: 6px; background: #575757; }
  .out.blank { height: 28px; }
  .grp { margin: 9px 0; border: 1px solid #4b4b4b; background: #575757; border-radius: 2px; }
  .read { color: #63e894; } .read.go { color: #fff; background: #268b44; border-color: #0e4f22; }
  .pan { width: 56px; height: 52px; margin: 14px auto; }
  .nums, .pads { display: grid; grid-template-columns: 1fr 1fr; gap: 5px; }
  .nums output { height: 28px; background: #303030; border-radius: 2px; text-align: center; line-height: 28px; }
  .meter { position: relative; margin: 28px 0 7px; height: 226px; flex: none; }
  .meter svg { width: 110px; height: 226px; overflow: visible; }
  .meter text { font-size: 11px; fill: #b4b4b4; text-anchor: end; }
  .fader { position: absolute; top: 7px; left: 69px; width: 28px; height: 218px; appearance: none; writing-mode: vertical-lr; direction: rtl; }
  .fader::-webkit-slider-runnable-track { height: 218px; width: 3px; background: #262626; }
  .fader::-webkit-slider-thumb { appearance: none; width: 28px; height: 56px; margin-left: -12px; border-radius: 3px; background: linear-gradient(#c9c9c9 0 12%, #6f6f6f 13% 15%, #989898 16% 24%, #777 25% 26%, #a2a2a2 27% 36%, #7b7b7b 37% 38%, #9a9a9a 39% 48%, #444 48% 51%, #b4b4b4 52% 62%, #8e8e8e 63% 64%, #c4c8c9 65% 74%, #999 75% 76%, #c9cccd 77% 84%, #222 84% 87%, #bdbdbd 88%); box-shadow: 1px 2px 4px #333; }
  .rec { color: #e0493f; }
  .ms { margin-top: 4px; }
  .sname { height: 53px; padding-top: 22px; text-align: center; }

  /* arrange area */
  .arrange { border: 3px solid #74b3f8; border-radius: 10px 10px 8px 8px; display: flex; flex-direction: column; min-width: 0; min-height: 0; background: #000; padding: 2px; overflow: hidden; }
  .tools { flex: none; height: 44px; background: #484848; border-radius: 5px 5px 0 0; display: flex; align-items: center; padding: 0 12px 0 13px; gap: 14px; }
  .t, .tg { flex: none; height: 33px; border: 1px solid #2b2b2b; border-radius: 6px; background: linear-gradient(#434343, #393939); box-shadow: 0 1px 0 #222; display: flex; align-items: center; justify-content: center; }
  .t { width: 52px; }
  .t.ghost { background: #484848; border-color: #3e3e3e; box-shadow: none; }
  .tg { overflow: hidden; }
  .tg button { width: 51px; height: 100%; display: flex; align-items: center; justify-content: center; }
  .tg button + button, .tg label + label { border-left: 1px solid #2b2b2b; }
  .menus button { width: auto; padding: 0 9px 0 18px; gap: 18px; font-weight: 500; }
  .t.on, .tg .on { background: #2765a5; }
  .wide button { width: 69px; gap: 14px; }
  .s13 { flex: 13; margin-right: -14px; } .s8 { flex: 8; margin-right: -14px; }
  .lab { color: #dadada; margin-right: -6px; }
  .lab.drag { margin-left: 2px; margin-right: -10px; }
  .sel { position: relative; height: 33px; width: 163px; border: 1px solid #2b2b2b; border-radius: 6px; background: linear-gradient(#434343, #393939); box-shadow: 0 1px 0 #222; }
  .sel.snap { width: 255px; }
  .sel select { appearance: none; width: 100%; height: 100%; padding-left: 17px; font-weight: 500; }
  .sel .updown { position: absolute; right: 9px; top: 6px; pointer-events: none; }
  .zooms label { width: 120px; display: flex; align-items: center; justify-content: space-between; padding: 0 12px 0 10px; height: 100%; }
  .zooms label:first-child { padding-left: 12px; }
  .zs { display: flex; flex-direction: column; padding-top: 1px; }
  .zs input { appearance: none; width: 71px; height: 20px; }
  .zs input::-webkit-slider-runnable-track { height: 5px; background: #242424; border-radius: 2px; }
  .zs input::-webkit-slider-thumb { appearance: none; width: 15px; height: 18px; margin-top: -10px; background: #a5a5a5; clip-path: polygon(50% 0, 100% 50%, 100% 100%, 0 100%, 0 50%); border-radius: 2px; }

  .grid { flex: 1; min-height: 0; margin-top: 2px; display: grid; grid-template-columns: 736px 1fr 22px; grid-template-rows: 56px 1fr 20px; gap: 2px; }
  .hhead { background: #535353; display: flex; align-items: flex-start; padding: 10px 13px; gap: 14px; }
  .hhead .t { background: linear-gradient(#4b4b4b, #424242); }
  .hhead .letter { font-size: 24px; font-weight: 300; }
  .hhead .go { background: #298f48; }
  .cfg { margin-left: auto; }
  .ruler { position: relative; display: flex; flex-direction: column; background: #323232; min-width: 0; }
  .rtop { height: 29px; display: flex; border-bottom: 2px solid #000; }
  .pre { width: 28px; background: #2c2c2c; border-right: 1px solid #000; }
  .mid { flex: 1; background: #4a4a4a; }
  .post { width: 15px; background: #2a2a2a; border-left: 1px solid #000; }
  .rl { position: absolute; inset: 0; width: 100%; height: 100%; }
  .barno { position: absolute; top: 0; color: #d2d2d2; font-size: 20px; }
  .corner { background: #373737; }
  .headers, .lanes { min-width: 0; min-height: 0; overflow: hidden; display: flex; flex-direction: column; position: relative; }
  .headers { background: #606060; }
  .rows { flex: 1; min-height: 0; margin-top: -6px; display: grid; grid-template-columns: minmax(0, 1fr); grid-template-rows: repeat(26, 1fr); position: relative; }
  .rest { flex: none; height: 54px; border-top: 2px solid #4a4a4a; }
  .track { display: flex; min-height: 0; }
  .num { width: 34px; flex: none; border-top: 2px solid #444; border-right: 2px solid #484848; display: grid; place-items: center; font-size: 19px; font-weight: 500; }
  .num span { padding: 4px 0 0 2px; }
  .tb { flex: 1; margin-left: 20px; border-top: 2px solid #484848; border-left: 2px solid #484848; display: flex; align-items: center; padding: 0 21px 2px 0; }
  .group .tb, .output .tb { border-left-color: transparent; }
  .first .tb { border-top-left-radius: 14px; }
  .selected .tb { background: linear-gradient(#878787, #808080); }
  .track .updown path { stroke: #b8b8b8; }
  .tslot { width: 27px; }
  .group .tslot { width: 29px; margin-left: -2px; }
  .mini { display: flex; width: 66px; height: 29px; border: 1px solid #3a3a3a; border-radius: 6px; overflow: hidden; background: #535353; margin-right: 9px; }
  .mini button { flex: 1; display: flex; align-items: center; justify-content: center; line-height: 1; font-weight: 400; }
  .mini button + button { border-left: 1px solid #3a3a3a; }
  .mini .pw { background: #2765a5; }
  .output .ph { width: 33px; margin-left: 33px; }
  .rslot { width: 34px; margin-right: 13px; }
  .mini.one { width: 34px; margin: 0; }
  .tname { display: flex; align-items: center; gap: 9px; font-weight: 500; white-space: pre; }
  .vol { width: 192px; height: 29px; margin-left: auto; }
  .vol::-webkit-slider-runnable-track { height: 19px; border-radius: 9px; background: #333432; }
  .selected .vol::-webkit-slider-runnable-track { background: linear-gradient(90deg, #343c38 75%, #3f3d39); }
  .vol::-webkit-slider-thumb { appearance: none; width: 29px; height: 29px; margin-top: -5px; border-radius: 50%; background: #818280; border: 2px solid #a8a8a8; box-shadow: 0 0 0 1px #444; }

  .lanes { background: #2e2e2e; container-type: inline-size; }
  .lanes .rest { border-top-color: #242424; }
  .gl { position: absolute; inset: 0; width: 100%; height: 100%; z-index: 1; }
  .gl path { stroke: rgba(255, 255, 255, .12); stroke-width: 2; }
  .lane { min-height: 0; border-top: 1px solid rgba(0, 0, 0, .3); padding: 0 0 1px 14px; display: flex; align-items: center; white-space: pre; }
  .lane.selected { box-shadow: inset 0 0 0 99px rgba(255, 255, 255, .04); }
  .gname { flex: 0 0 71.900cqw; font-weight: 700; font-size: 18px; color: var(--g); z-index: 2; }
  .region { position: relative; z-index: 2; height: 100%; flex: none; border: 2px solid #000; border-radius: 8px; overflow: hidden; display: flex; padding: 4px 0 0 7px; font-size: 17px; font-weight: 500; line-height: 20px; }
  .rn { flex: 0 0 71.900cqw; display: flex; gap: 12px; align-items: center; height: 20px; }
  .wave { position: absolute; inset: 0; width: 100%; height: 100%; }
  .endzone { position: absolute; right: 0; top: 0; bottom: 0; width: 15px; z-index: 3; background: rgba(0, 0, 0, .3); border-left: 1px solid rgba(0, 0, 0, .4); }
  .vscroll { background: #383838; padding: 9px 4px 107px 5px; }
  .vscroll span { display: block; height: 100%; border-radius: 7px; background: #747474; }
  .foot { background: #363636; } .foot.c { background: #2a2a2a; }

  /* notes */
  .notes { margin: 3px 0 2px; border: 2px solid #161616; border-radius: 8px 8px 4px 4px; overflow: hidden; display: flex; flex-direction: column; background: #404040; }
  .tabs { flex: none; height: 46px; display: grid; grid-template-columns: 1fr 1fr; background: #484848; border-bottom: 2px solid #101010; font-weight: 500; }
  .tabs .act { background: #5e5e5e; border-right: 2px solid #1a1a1a; }
  .nhead { flex: none; height: 58px; background: #616161; border-bottom: 2px solid #000; display: grid; grid-template-columns: 123px 1fr 123px; align-items: center; padding: 2px 11px 0 10px; }
  .nhead h2 { margin: 0; font-size: 20px; font-weight: 500; text-align: center; }
  .nhead button { width: 52px; height: 33px; border: 1px solid #3c3c3c; border-radius: 6px; background: #535353; box-shadow: 0 1px 0 #444; }
  .nhead .ed { width: 123px; font-weight: 500; }
  .nbody { flex: 1; min-height: 0; display: flex; }
  .nbody textarea { flex: 1; resize: none; outline: 0; padding: 34px 10px 0 46px; font: 24px/28px "Liberation Sans", Arial, sans-serif; color: #d6d6d6; }
  .nbody span { width: 22px; border-left: 2px solid #000; background: #373737; }
</style>
